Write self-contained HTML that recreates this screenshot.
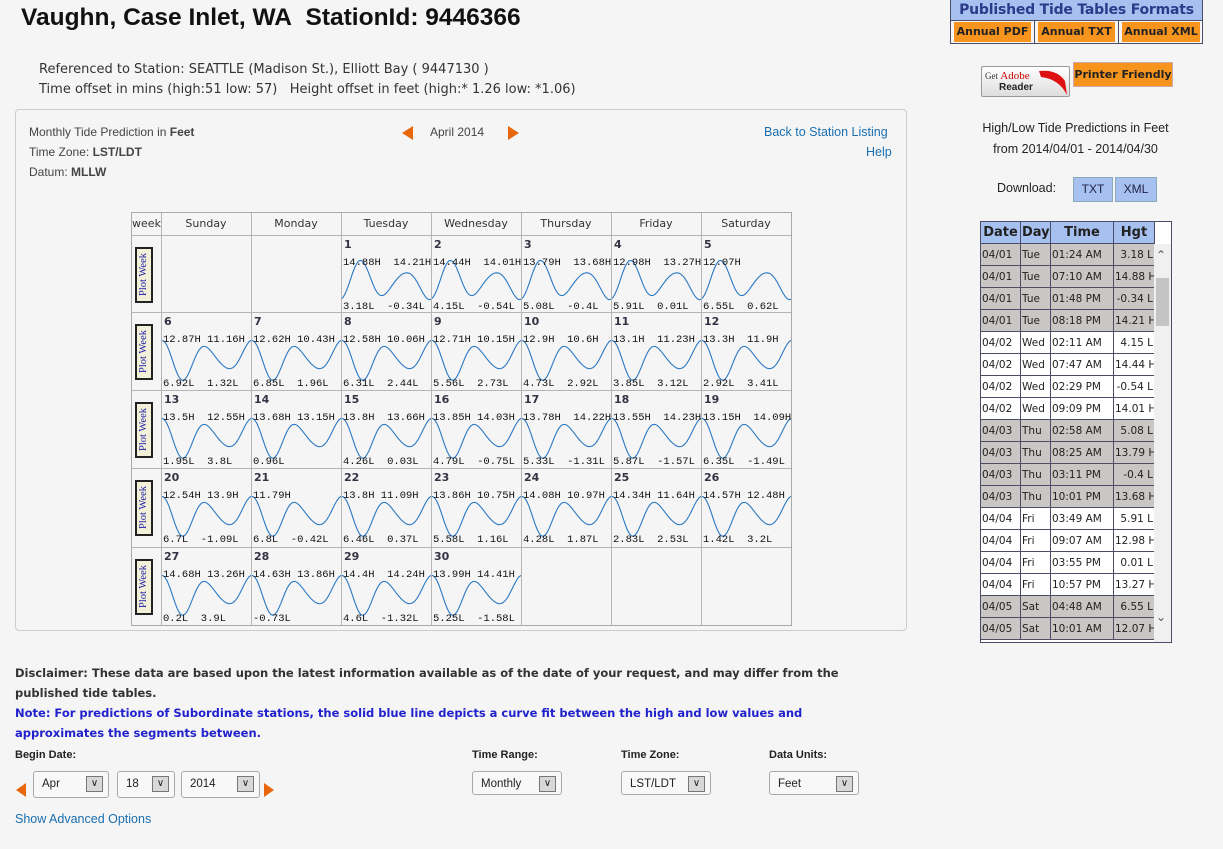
<!DOCTYPE html>
<html><head><meta charset="utf-8"><style>
body{margin:0;width:1223px;height:849px;background:#f5f5f5;font-family:"Liberation Sans",sans-serif;position:relative;overflow:hidden;color:#333}
.a{position:absolute;white-space:nowrap}
.v{font-family:"DejaVu Sans",sans-serif}
.t{font-size:12px;color:#444}
.lnk{color:#1a6fb0;font-size:12px}
.orange{background:#f7941d;font-family:"DejaVu Sans",sans-serif;font-weight:bold;font-size:11px;color:#222}
.cal{position:absolute;left:131px;top:212px;width:659px;height:412px;border:1px solid #aaa;background:#f5f5f5}
.hl{position:absolute;background:#b5b5b5}
.cell{position:absolute;font-family:"Liberation Mono","DejaVu Sans Mono",monospace;font-size:10.5px;color:#111}
.num{position:absolute;font-family:"DejaVu Sans",sans-serif;font-weight:bold;font-size:11px;color:#334}
.pw{position:absolute;width:14px;height:52px;border:2px solid #222;background:#f2f0d8;color:#2222aa;font-family:"Liberation Serif",serif;font-size:10.5px;writing-mode:vertical-rl;transform:rotate(180deg);text-align:center;line-height:14px}
.dh{position:absolute;top:0;height:22px;line-height:22px;font-family:"DejaVu Sans",sans-serif;font-size:11px;color:#333;text-align:center}
table.r{position:absolute;left:-1px;top:-1px;border-collapse:collapse;table-layout:fixed;width:174px;font-family:"DejaVu Sans",sans-serif;font-size:10.5px}
table.r td{border:1px solid #4b4e66;height:21px;padding:0 1px;color:#222;overflow:hidden;white-space:nowrap}
.sel{position:absolute;height:24px;border:1px solid #aaa;border-radius:3px;background:#f8f8f8;font-size:11.5px;color:#222;line-height:24px;padding-left:8px;box-sizing:border-box}
.sel i{position:absolute;right:5px;top:4px;width:15px;height:14px;border:1px solid #777;background:#d8d8d8;font-style:normal;font-size:10px;line-height:14px;text-align:center}
</style></head><body>
<div class="a" style="left:21px;top:4px;font-size:24.5px;font-weight:bold;color:#111">Vaughn, Case Inlet, WA&nbsp; StationId: 9446366</div>
<div class="a v" style="left:39px;top:62px;font-size:13px;color:#333">Referenced to Station: SEATTLE (Madison St.), Elliott Bay ( 9447130 )</div>
<div class="a v" style="left:39px;top:82px;font-size:13px;color:#333">Time offset in mins (high:51 low: 57)&nbsp;&nbsp; Height offset in feet (high:* 1.26 low: *1.06)</div>

<div class="a" style="left:15px;top:109px;width:890px;height:520px;border:1px solid #ccc;border-radius:4px;background:#f5f5f5"></div>
<div class="a t" style="left:29px;top:125px">Monthly Tide Prediction in <b>Feet</b></div>
<div class="a t" style="left:29px;top:145px">Time Zone: <b>LST/LDT</b></div>
<div class="a t" style="left:29px;top:165px">Datum: <b>MLLW</b></div>
<div class="a" style="left:402px;top:126px;width:0;height:0;border-top:7px solid transparent;border-bottom:7px solid transparent;border-right:11px solid #e8670c"></div>
<div class="a t" style="left:430px;top:125px">April 2014</div>
<div class="a" style="left:508px;top:126px;width:0;height:0;border-top:7px solid transparent;border-bottom:7px solid transparent;border-left:11px solid #e8670c"></div>
<div class="a lnk" style="left:764px;top:125px;font-size:12.5px">Back to Station Listing</div>
<div class="a lnk" style="left:866px;top:145px;font-size:12.5px">Help</div>

<div class="cal" id="cal"></div>

<div class="a" style="left:15px;top:663px;font-family:'DejaVu Sans',sans-serif;font-weight:bold;font-size:11.5px;color:#333;line-height:20px;white-space:normal;width:880px">Disclaimer: These data are based upon the latest information available as of the date of your request, and may differ from the published tide tables.<br><span style="color:#2222cc">Note: For predictions of Subordinate stations, the solid blue line depicts a curve fit between the high and low values and approximates the segments between.</span></div>

<div class="a" style="left:15px;top:749px;font-size:11px;font-weight:bold;color:#222">Begin Date:</div>
<div class="a" style="left:472px;top:749px;font-size:11px;font-weight:bold;color:#222">Time Range:</div>
<div class="a" style="left:621px;top:749px;font-size:11px;font-weight:bold;color:#222">Time Zone:</div>
<div class="a" style="left:769px;top:749px;font-size:11px;font-weight:bold;color:#222">Data Units:</div>
<div class="a" style="left:16px;top:783px;width:0;height:0;border-top:7px solid transparent;border-bottom:7px solid transparent;border-right:10px solid #e8670c"></div>
<div class="sel" style="left:33px;top:771px;width:76px;height:27px">Apr<i>∨</i></div>
<div class="sel" style="left:117px;top:771px;width:58px;height:27px">18<i>∨</i></div>
<div class="sel" style="left:181px;top:771px;width:79px;height:27px">2014<i>∨</i></div>
<div class="a" style="left:264px;top:783px;width:0;height:0;border-top:7px solid transparent;border-bottom:7px solid transparent;border-left:10px solid #e8670c"></div>
<div class="sel" style="left:472px;top:771px;width:90px">Monthly<i>∨</i></div>
<div class="sel" style="left:621px;top:771px;width:90px">LST/LDT<i>∨</i></div>
<div class="sel" style="left:769px;top:771px;width:90px">Feet<i>∨</i></div>
<div class="a lnk" style="left:15px;top:812px;font-size:12.5px">Show Advanced Options</div>

<!-- right column -->
<div class="a" style="left:950px;top:0;width:253px;height:44px;border:1px solid #4b4e66;box-sizing:border-box;background:#f5f5f5"></div>
<div class="a v" style="left:951px;top:0;width:251px;height:20px;background:#a6c0f0;font-weight:bold;font-size:14px;color:#2c3a8a;line-height:20px;text-align:center;letter-spacing:-0.2px">Published Tide Tables Formats</div>
<div class="a" style="left:950px;top:20px;width:253px;height:1px;background:#4b4e66"></div>
<div class="a orange" style="left:954px;top:22px;width:77px;height:20px;line-height:20px;text-align:center">Annual PDF</div>
<div class="a" style="left:1034px;top:21px;width:1px;height:23px;background:#4b4e66"></div>
<div class="a orange" style="left:1038px;top:22px;width:77px;height:20px;line-height:20px;text-align:center">Annual TXT</div>
<div class="a" style="left:1118px;top:21px;width:1px;height:23px;background:#4b4e66"></div>
<div class="a orange" style="left:1122px;top:22px;width:78px;height:20px;line-height:20px;text-align:center">Annual XML</div>
<div class="a" style="left:981px;top:66px;width:87px;height:29px;border:1px solid #999;border-radius:2px;background:linear-gradient(#fff,#ddd)"><span class="a" style="left:3px;top:3px;font-family:'Liberation Serif',serif;font-size:9px;color:#333">Get <span style="color:#c00;font-size:11px">Adobe</span></span><span class="a" style="left:17px;top:15px;font-size:10px;font-weight:bold;color:#222">Reader</span><svg class="a" style="left:55px;top:0" width="32" height="29"><path d="M2,4 Q20,2 28,14 L30,28 Q22,12 4,10Z" fill="#d11"/></svg></div>
<div class="a orange" style="left:1073px;top:62px;width:98px;height:23px;line-height:23px;text-align:center;border:1px solid #caa">Printer Friendly</div>
<div class="a" style="left:970px;top:118px;width:211px;text-align:center;font-size:12.5px;color:#222;line-height:21px">High/Low Tide Predictions in Feet<br>from 2014/04/01 - 2014/04/30</div>
<div class="a" style="left:997px;top:181px;font-size:12.5px;color:#222">Download:</div>
<div class="a" style="left:1073px;top:177px;width:38px;height:23px;background:#a6c0f0;border:1px solid #8ab;font-size:12px;line-height:23px;text-align:center;color:#224">TXT</div>
<div class="a" style="left:1115px;top:177px;width:40px;height:23px;background:#a6c0f0;border:1px solid #8ab;font-size:12px;line-height:23px;text-align:center;color:#224">XML</div>
<div class="a" style="left:980px;top:221px;width:192px;height:422px;overflow:hidden;border:1px solid #4b4e66;box-sizing:border-box;background:#fff">
<table class="r" id="rt"></table>
<div class="a" style="left:173px;top:22px;width:18px;height:400px;background:#f0f0f0"></div>
<div class="a" style="left:175px;top:56px;width:13px;height:48px;background:#c4c4c4"></div>
<div class="a" style="left:175px;top:26px;font-size:12px;color:#555">⌃</div>
<div class="a" style="left:175px;top:388px;font-size:12px;color:#555">⌄</div>
</div>

<script>
(function(){
var cal=document.getElementById('cal');
var cols=[0,29,119,209,299,389,479,569,659];
var rows=[0,22,99,177,255,334,412];
var days=['Sunday','Monday','Tuesday','Wednesday','Thursday','Friday','Saturday'];
var h='';
h+='<div class="dh" style="left:0;width:29px">week</div>';
for(var i=0;i<7;i++)h+='<div class="dh" style="left:'+cols[i+1]+'px;width:90px">'+days[i]+'</div>';
for(var i=1;i<8;i++)h+='<div class="hl" style="left:'+cols[i]+'px;top:0;width:1px;height:412px"></div>';
for(var j=1;j<6;j++)h+='<div class="hl" style="left:0;top:'+rows[j]+'px;width:659px;height:1px"></div>';
var D=[
[null,null,[1,'14.88H  14.21H','3.18L  -0.34L'],[2,'14.44H  14.01H','4.15L  -0.54L'],[3,'13.79H  13.68H','5.08L  -0.4L'],[4,'12.98H  13.27H','5.91L  0.01L'],[5,'12.07H','6.55L  0.62L']],
[[6,'12.87H 11.16H','6.92L  1.32L'],[7,'12.62H 10.43H','6.85L  1.96L'],[8,'12.58H 10.06H','6.31L  2.44L'],[9,'12.71H 10.15H','5.56L  2.73L'],[10,'12.9H  10.6H','4.73L  2.92L'],[11,'13.1H  11.23H','3.85L  3.12L'],[12,'13.3H  11.9H','2.92L  3.41L']],
[[13,'13.5H  12.55H','1.95L  3.8L'],[14,'13.68H 13.15H','0.96L'],[15,'13.8H  13.66H','4.26L  0.03L'],[16,'13.85H 14.03H','4.79L  -0.75L'],[17,'13.78H  14.22H','5.33L  -1.31L'],[18,'13.55H  14.23H','5.87L  -1.57L'],[19,'13.15H  14.09H','6.35L  -1.49L']],
[[20,'12.54H 13.9H','6.7L  -1.09L'],[21,'11.79H','6.8L  -0.42L'],[22,'13.8H 11.09H','6.46L  0.37L'],[23,'13.86H 10.75H','5.58L  1.16L'],[24,'14.08H 10.97H','4.28L  1.87L'],[25,'14.34H 11.64H','2.83L  2.53L'],[26,'14.57H 12.48H','1.42L  3.2L']],
[[27,'14.68H 13.26H','0.2L  3.9L'],[28,'14.63H 13.86H','-0.73L'],[29,'14.4H  14.24H','4.6L  -1.32L'],[30,'13.99H 14.41H','5.25L  -1.58L'],null,null,null]];
var svg='<svg style="position:absolute;left:0;top:0" width="659" height="412">';
for(var r=0;r<5;r++){
 var ty=rows[r+1];
 h+='<div class="pw" style="left:3px;top:'+(ty+12)+'px">Plot Week</div>';
 var x0=null,x1=null;
 for(var c=0;c<7;c++){var d=D[r][c];if(!d)continue;var x=cols[c+1];
  if(x0===null)x0=x;x1=x+90;
  h+='<div class="num" style="left:'+(x+3)+'px;top:'+(ty+3)+'px">'+d[0]+'</div>';
  h+='<div class="cell" style="left:'+(x+2)+'px;top:'+(ty+22)+'px">'+d[1].replace(/ /g,'&nbsp;')+'</div>';
  h+='<div class="cell" style="left:'+(x+2)+'px;top:'+(ty+66)+'px">'+d[2].replace(/ /g,'&nbsp;')+'</div>';
 }
 var p='';var mid=ty+47,amp=22;
 for(var x=x0;x<=x1;x+=2){var y=mid-amp*Math.sin((x-x0)/45*2*Math.PI+(r==0?-1.2:1.6))*(0.7+0.3*Math.sin((x-x0)/90*Math.PI*2+0.5));p+=(p?'L':'M')+x+','+y.toFixed(1);}
 svg+='<path d="'+p+'" fill="none" stroke="#2a78c2" stroke-width="1.1"/>';
}
svg+='</svg>';
cal.innerHTML=svg+h;
var R=[['04/01','Tue','01:24 AM','3.18 L'],['04/01','Tue','07:10 AM','14.88 H'],['04/01','Tue','01:48 PM','-0.34 L'],['04/01','Tue','08:18 PM','14.21 H'],['04/02','Wed','02:11 AM','4.15 L'],['04/02','Wed','07:47 AM','14.44 H'],['04/02','Wed','02:29 PM','-0.54 L'],['04/02','Wed','09:09 PM','14.01 H'],['04/03','Thu','02:58 AM','5.08 L'],['04/03','Thu','08:25 AM','13.79 H'],['04/03','Thu','03:11 PM','-0.4 L'],['04/03','Thu','10:01 PM','13.68 H'],['04/04','Fri','03:49 AM','5.91 L'],['04/04','Fri','09:07 AM','12.98 H'],['04/04','Fri','03:55 PM','0.01 L'],['04/04','Fri','10:57 PM','13.27 H'],['04/05','Sat','04:48 AM','6.55 L'],['04/05','Sat','10:01 AM','12.07 H']];
var t='<colgroup><col style="width:40px"><col style="width:30px"><col style="width:63px"><col style="width:41px"></colgroup><tr style="background:#a6c0f0;font-weight:bold;font-size:13px"><td style="text-align:center">Date</td><td>Day</td><td style="text-align:center">Time</td><td style="text-align:center">Hgt</td></tr>';
R.forEach(function(a,i){var g=Math.floor(i/4)%2==0;t+='<tr style="background:'+(g?'#c9c6c3':'#fff')+'"><td>'+a[0]+'</td><td>'+a[1]+'</td><td>'+a[2]+'</td><td style="text-align:right">'+a[3]+'</td></tr>';});
document.getElementById('rt').innerHTML=t;
})();
</script>
</body></html>
